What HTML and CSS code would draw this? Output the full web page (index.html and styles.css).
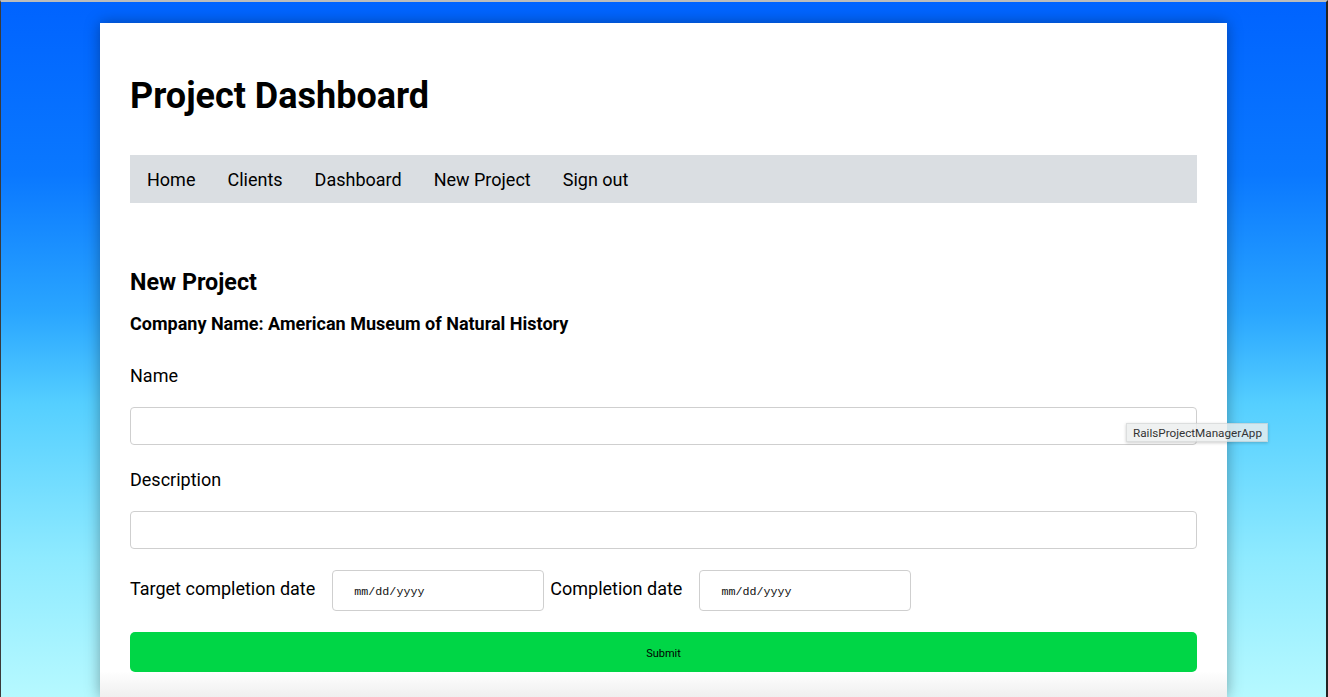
FILE: index.html
```html
<!DOCTYPE html>
<html lang="en">
<head>
<meta charset="utf-8">
<title>RailsProjectManagerApp</title>
<link rel="stylesheet" href="styles.css">
</head>
<body>
<div class="window">
  <main class="card">
    <h1 class="title">Project Dashboard</h1>
    <nav class="nav">
      <a class="nav-link" href="#">Home</a>
      <a class="nav-link" href="#">Clients</a>
      <a class="nav-link" href="#">Dashboard</a>
      <a class="nav-link" href="#">New Project</a>
      <a class="nav-link" href="#">Sign out</a>
    </nav>
    <h2 class="section-title">New Project</h2>
    <p class="company">Company Name: American Museum of Natural History</p>
    <form class="form">
      <label class="field-label" for="name">Name</label>
      <input class="text-input" id="name" type="text">
      <label class="field-label" for="desc">Description</label>
      <input class="text-input" id="desc" type="text">
      <div class="date-row">
        <label class="date-label" for="target">Target completion date</label>
        <input class="date-input" id="target" type="text" placeholder="mm/dd/yyyy">
        <label class="date-label date-label-second" for="done">Completion date</label>
        <input class="date-input" id="done" type="text" placeholder="mm/dd/yyyy">
      </div>
      <button class="submit" type="button">Submit</button>
    </form>
  </main>
  <div class="tooltip">RailsProjectManagerApp</div>
</div>
</body>
</html>
```

FILE: styles.css
```css
* { box-sizing: border-box; }

html, body {
  margin: 0;
  height: 100%;
}

body {
  font-family: Roboto, "Liberation Sans", sans-serif;
  color: #000;
  background: linear-gradient(180deg, #0063ff 0%, #0a78ff 25%, #2aa6ff 45%, #55cfff 58%, #8eeaff 80%, #b6f9ff 100%);
  overflow: hidden;
}

.window {
  position: relative;
  height: 100%;
  border-top: 2px solid #bcbcbc;
  border-left: 1px solid #3a3a3a;
  border-right: 2px solid #222;
  padding-top: 21px;
  padding-left: 99px;
}

.card {
  width: 1127px;
  height: 674px;
  background: linear-gradient(180deg, #fff 0, #fff calc(100% - 26px), #efefef 100%);
  box-shadow: 0 0 14px rgba(0, 0, 0, 0.35);
  padding: 52px 30px 0 30px;
  overflow: hidden;
}

.title {
  margin: 0;
  font-size: 36px;
  line-height: 42px;
  font-weight: 700;
}

.nav {
  margin-top: 38px;
  height: 48px;
  background: #dadee2;
  display: flex;
  align-items: center;
  padding-left: 1px;
}

.nav-link {
  color: #000;
  text-decoration: none;
  font-size: 18px;
  line-height: 48px;
  padding: 0 16px;
  position: relative;
  top: 1px;
}

.section-title {
  margin: 65px 0 0 0;
  font-size: 23.3px;
  line-height: 28px;
  font-weight: 700;
}

.company {
  margin: 16px 0 0 0;
  font-size: 18px;
  line-height: 24px;
  font-weight: 700;
}

.form {
  display: flex;
  flex-direction: column;
  margin-top: 28px;
}

.field-label {
  font-size: 18px;
  line-height: 24px;
}

.text-input {
  margin-top: 19px;
  margin-bottom: 23px;
  height: 38px;
  width: 100%;
  border: 1px solid #cfcfcf;
  border-radius: 4px;
  background: #fff;
  font-size: 16px;
  padding: 0 12px;
}

.text-input + .field-label + .text-input {
  margin-bottom: 21px;
}

.date-row {
  display: flex;
  align-items: center;
  height: 41px;
}

.date-label {
  font-size: 18px;
  line-height: 24px;
  margin-top: -4px;
}

.date-input {
  width: 212px;
  height: 41px;
  margin-left: 17px;
  border: 1px solid #cfcfcf;
  border-radius: 4px;
  background: #fff;
  font-family: "Liberation Mono", monospace;
  font-size: 11.7px;
  padding: 2px 0 0 21px;
}

.date-input::placeholder {
  color: #111;
}

.date-label-second {
  margin-left: 6px;
}

.submit {
  margin-top: 21px;
  height: 40px;
  width: 100%;
  border: 0;
  border-radius: 5px;
  background: #00d646;
  color: #000;
  font-family: Roboto, "Liberation Sans", sans-serif;
  font-size: 11px;
  padding-top: 4px;
}

.tooltip {
  position: absolute;
  left: 1125px;
  top: 421px;
  height: 19px;
  padding: 0 5px 0 6px;
  font-family: Roboto, "Liberation Sans", sans-serif;
  font-size: 11.7px;
  line-height: 18px;
  color: #333;
  background: rgba(236, 238, 238, 0.82);
  border: 1px solid rgba(0, 0, 0, 0.08);
  box-shadow: 0 1px 3px rgba(0, 0, 0, 0.2);
}
```
